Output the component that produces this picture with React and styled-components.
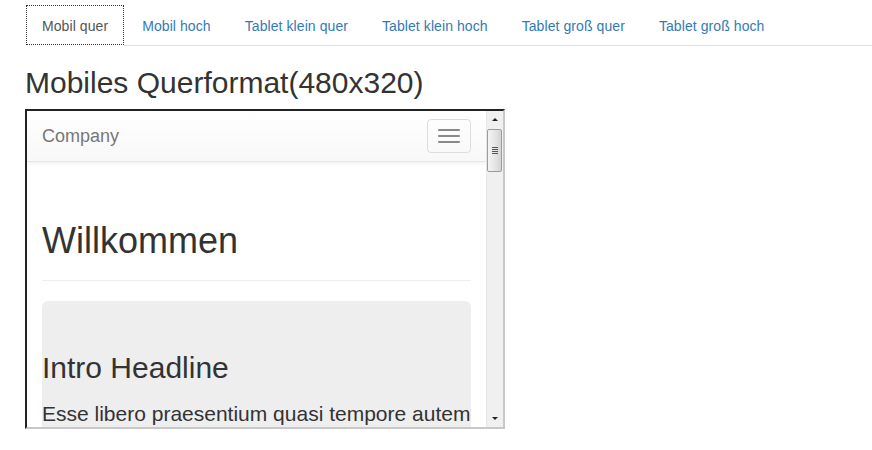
import React from 'react'
import styled, { createGlobalStyle } from 'styled-components'

const GlobalStyle = createGlobalStyle`
body {
  margin: 0;
  background: #fff;
  font-family: "Liberation Sans", Arial, Helvetica, sans-serif;
  color: #333;
}
`

const Page = styled.div`
padding: 5px 0 0 25px;
`

const TabList = styled.ul`
display: flex;
list-style: none;
margin: 0 0 0 1px;
padding: 0;
border-bottom: 1px solid #ddd;
`

const TabItem = styled.li`
margin-right: 2px;
`

const TabLink = styled.a`
display: block;
padding: 10px 15px 8px;
font-size: 14px;
line-height: 20px;
letter-spacing: 0.08px;
text-decoration: none;
border: 1px dotted ${props => props.$active ? "#333" : "transparent"};
color: ${props => props.$active ? "#555" : "#337ab7"};
background: #fff;
box-shadow: ${props => props.$active ? "0 1px 0 #fff" : "none"};
cursor: pointer;
`

const Title = styled.h2`
margin: 20px 0 10px;
font-size: 30px;
font-weight: 400;
line-height: 33px;
color: #333;
`

const Frame = styled.div`
width: 480px;
height: 320px;
box-sizing: border-box;
border: 2px solid;
border-color: #222 #c8c8c8 #c8c8c8 #222;
display: flex;
overflow: hidden;
`

const FramePage = styled.div`
flex: 1;
min-width: 0;
overflow: hidden;
`

const Navbar = styled.div`
height: 50px;
display: flex;
justify-content: space-between;
align-items: flex-start;
background: linear-gradient(to bottom, #fff 0%, #f8f8f8 100%);
border-bottom: 1px solid #e7e7e7;
box-shadow: 0 1px 5px rgba(0, 0, 0, 0.075);
position: relative;
`

const Brand = styled.span`
padding: 15px;
font-size: 18px;
line-height: 20px;
color: #777;
`

const Toggle = styled.div`
margin: 8px 15px 0 0;
padding: 9px 10px;
border: 1px solid #ddd;
border-radius: 4px;
display: flex;
flex-direction: column;
gap: 4px;
`

const Bar = styled.span`
display: block;
width: 22px;
height: 2px;
border-radius: 1px;
background: #888;
`

const Content = styled.div`
padding: 59px 15px 0;
`

const Welcome = styled.h1`
margin: 0;
font-size: 36px;
font-weight: 400;
line-height: 1.1;
`

const Rule = styled.hr`
margin: 19px 0 20px;
border: 0;
border-top: 1px solid #eee;
`

const Jumbotron = styled.div`
padding: 50px 0 30px;
background: #eee;
border-radius: 6px;
`

const IntroTitle = styled.h2`
margin: 0 0 15px;
font-size: 30px;
font-weight: 400;
line-height: 33px;
`

const Lead = styled.p`
margin: 0;
font-size: 21px;
line-height: 30px;
white-space: nowrap;
`

const ScrollTrack = styled.div`
width: 17px;
flex-shrink: 0;
background: #f0f0f0;
border-left: 1px solid #e6e6e6;
box-sizing: border-box;
display: flex;
flex-direction: column;
`

const ArrowButton = styled.div`
height: 17px;
display: flex;
align-items: center;
justify-content: center;
`

const Arrow = styled.span`
width: 0;
height: 0;
border-left: 3px solid transparent;
border-right: 3px solid transparent;
border-${props => props.$down ? "top" : "bottom"}: 3px solid #222;
`

const Thumb = styled.div`
height: 43px;
margin: 1px 1px 0 0;
box-sizing: border-box;
border: 1px solid #9c9c9c;
border-radius: 2px;
background: linear-gradient(to right, #f4f4f4 0%, #e6e6e6 50%, #d4d4d4 100%);
display: flex;
align-items: center;
justify-content: center;
`

const Grip = styled.span`
width: 6px;
height: 7px;
background: repeating-linear-gradient(to bottom, #555 0, #555 1px, transparent 1px, transparent 2px);
`

const Spacer = styled.div`
flex: 1;
`

const tabs = [
  "Mobil quer",
  "Mobil hoch",
  "Tablet klein quer",
  "Tablet klein hoch",
  "Tablet groß quer",
  "Tablet groß hoch",
]

const App = () => {
  return (
    <Page>
      <GlobalStyle />
      <TabList>
        {tabs.map((t, i) => (
          <TabItem key={t}>
            <TabLink $active={i === 0}>{t}</TabLink>
          </TabItem>
        ))}
      </TabList>
      <Title>Mobiles Querformat(480x320)</Title>
      <Frame>
        <FramePage>
          <Navbar>
            <Brand>Company</Brand>
            <Toggle>
              <Bar />
              <Bar />
              <Bar />
            </Toggle>
          </Navbar>
          <Content>
            <Welcome>Willkommen</Welcome>
            <Rule />
            <Jumbotron>
              <IntroTitle>Intro Headline</IntroTitle>
              <Lead>Esse libero praesentium quasi tempore autem</Lead>
            </Jumbotron>
          </Content>
        </FramePage>
        <ScrollTrack>
          <ArrowButton>
            <Arrow />
          </ArrowButton>
          <Thumb>
            <Grip />
          </Thumb>
          <Spacer />
          <ArrowButton>
            <Arrow $down />
          </ArrowButton>
        </ScrollTrack>
      </Frame>
    </Page>
  )
}

export default App
